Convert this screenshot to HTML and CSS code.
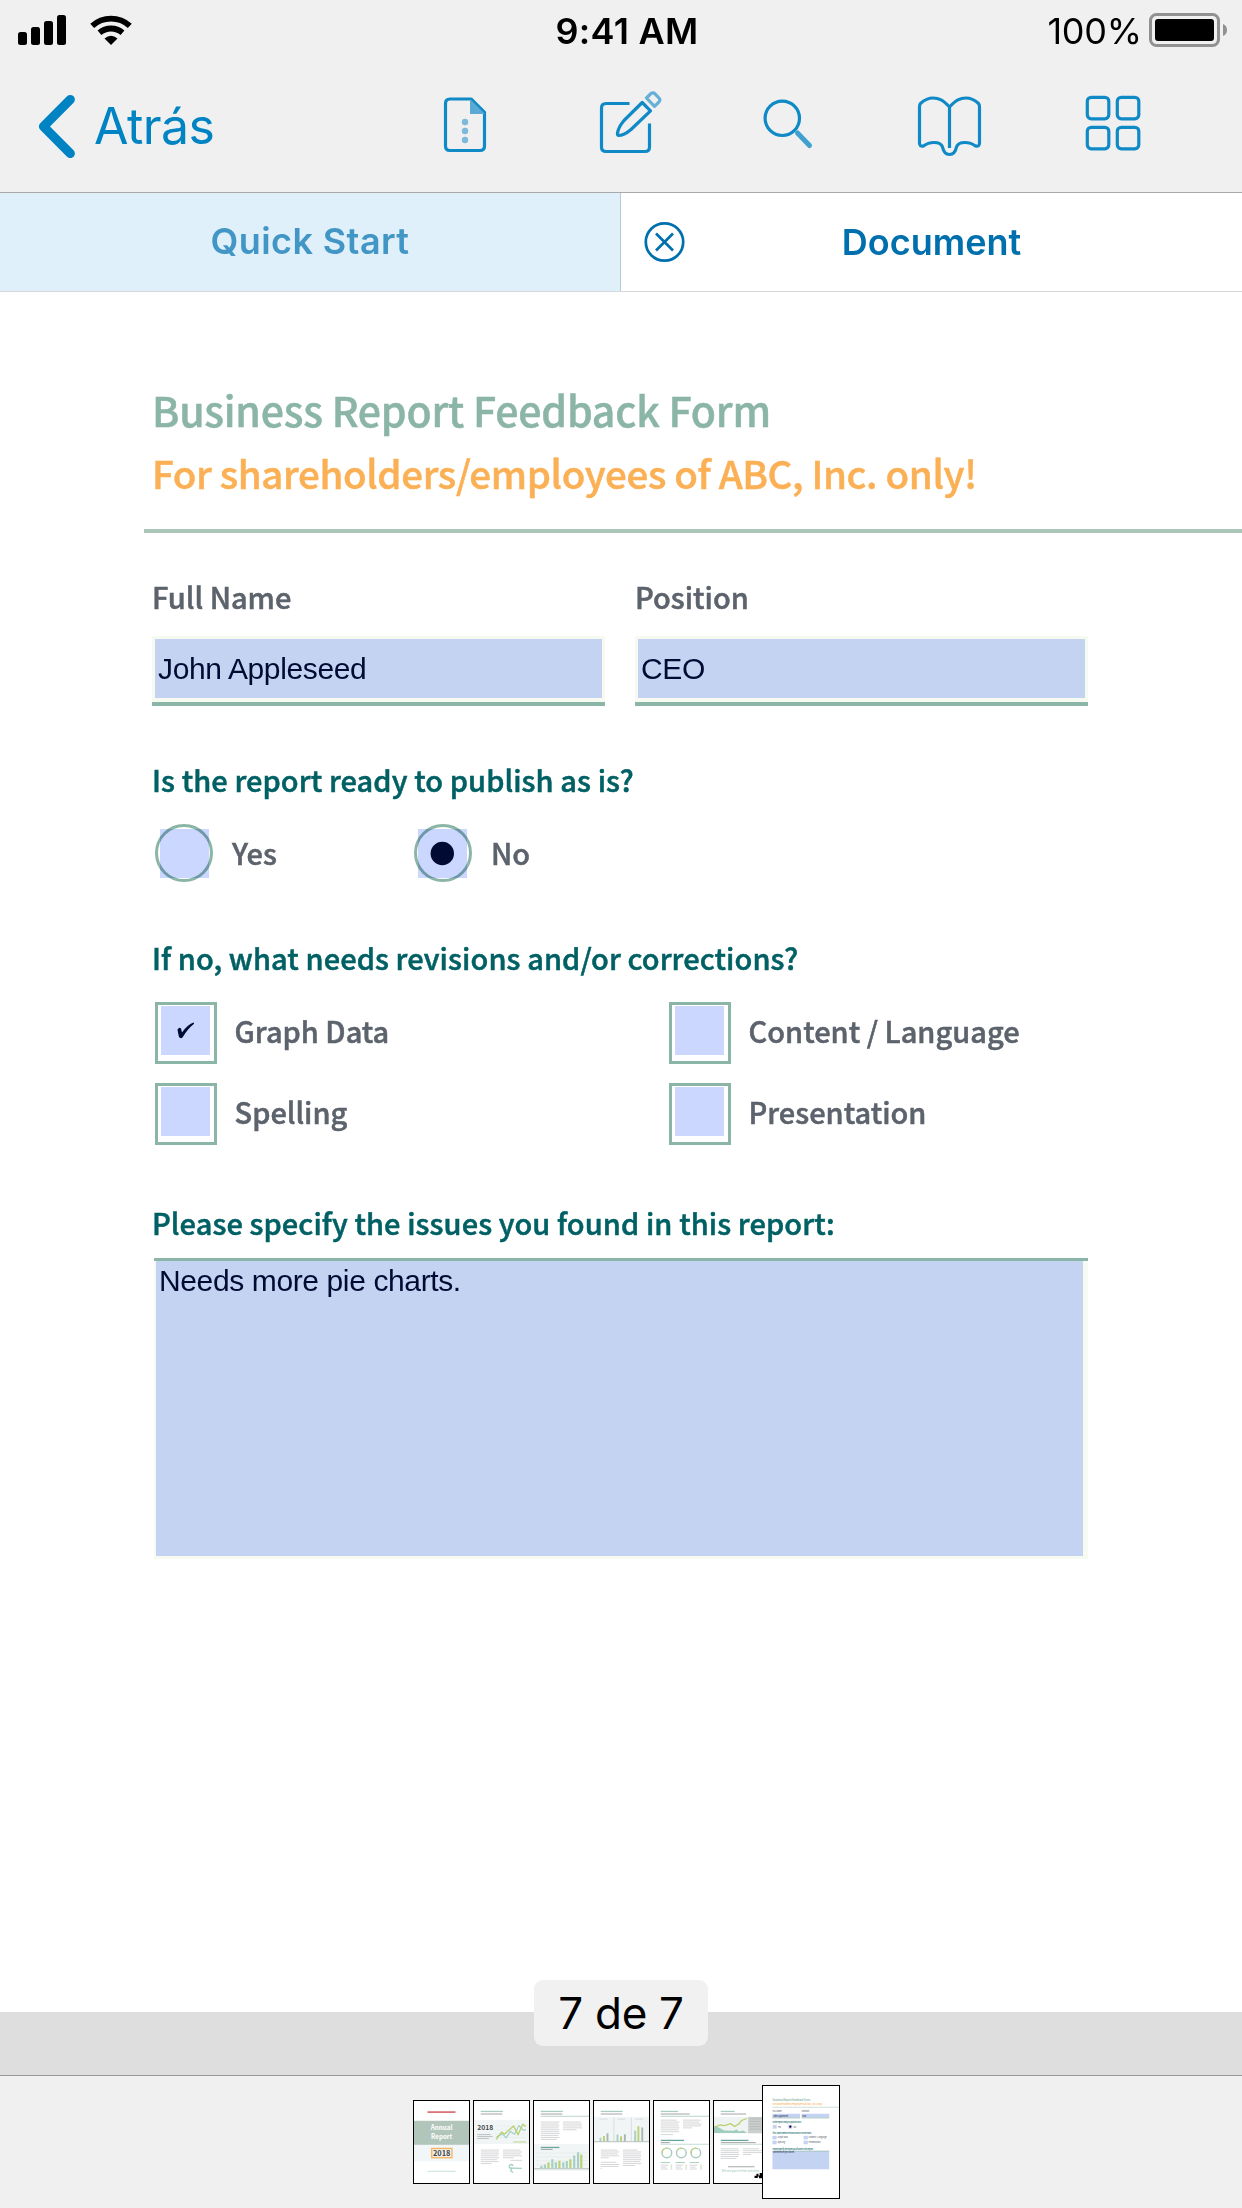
FILE: index.html
```html
<!DOCTYPE html>
<html lang="es">
<head>
<meta charset="utf-8">
<title>Document</title>
<link rel="stylesheet" href="styles.css">
</head>
<body>
<header class="header">
  <div class="status">
    <svg class="status-left" width="140" height="62" viewBox="0 0 140 62">
      <rect x="18" y="32" width="9" height="13" rx="2.5"/><rect x="31" y="27" width="9" height="18" rx="2.5"/><rect x="44" y="21" width="9" height="24" rx="2.5"/><rect x="57" y="15" width="9" height="30" rx="2.5"/>
      <path d="M92.200 25.800A28 28 0 0 1 129.800 25.800M99.500 32.800A17.500 17.500 0 0 1 122.500 32.800" fill="none" stroke="#000" stroke-width="5.800"/>
      <path d="M104.500 38.500Q111 33 117.500 38.500L111 45Z"/>
    </svg>
    <span class="time">9:41 AM</span>
    <div class="status-right">
      <span class="percent">100%</span>
      <svg width="80" height="62" viewBox="1148 0 80 62">
        <rect x="1150.500" y="14.500" width="68" height="31" rx="6" fill="none" stroke="#919191" stroke-width="3"/>
        <rect x="1155" y="19" width="59" height="22" rx="3"/>
        <path d="M1223 24q4 1.500 4 6t-4 6z" fill="#919191"/>
      </svg>
    </div>
  </div>
  <nav class="nav">
    <a class="back">
      <svg width="40" height="68" viewBox="37 90 40 68"><path d="M70.300 99.500L43.500 126.500L70.300 153.500" fill="none" stroke="#0083c3" stroke-width="9.200" stroke-linecap="round" stroke-linejoin="round"/></svg>
      <span>Atrás</span>
    </a>
    <div class="tools">
      <svg class="tool-doc" width="46" height="68" viewBox="442 90 46 68">
        <path d="M471 99H450Q445.500 99 445.500 103.500V146Q445.500 150.500 450 150.500H480Q484.500 150.500 484.500 146V112.500Z"/>
        <path class="soft" d="M470 99V114H485Z"/>
        <g class="dots"><circle cx="465" cy="122" r="3.200"/><circle cx="465" cy="131" r="3.200"/><circle cx="465" cy="140" r="3.200"/></g>
      </svg>
      <svg class="tool-edit" width="66" height="68" viewBox="598 90 66 68">
        <path d="M629.500 103.500H606Q601.500 103.500 601.500 108V147Q601.500 151.500 606 151.500H645Q649.500 151.500 649.500 147V123.500"/>
        <path d="M642.200 102.500L650.500 110.800L631 129.500Q624 135.500 618.500 135.500Q617.200 135 617.500 133Q618.500 127 624 120.500Z"/>
        <path class="light" d="M646.500 98L651 93.500Q653 92 655 93.800L659 98Q660.700 99.800 659 101.800L654.500 106.300Z"/>
      </svg>
      <svg class="tool-search" width="52" height="68" viewBox="762 90 52 68">
        <circle cx="782.300" cy="118.300" r="17.200"/><path class="handle" d="M797.500 133L809.500 145.500"/>
      </svg>
      <svg class="tool-book" width="68" height="68" viewBox="915 90 68 68">
        <path d="M949.500 148V107C943 100 939 98 933 98Q926.500 98 920.500 103.500Q919.500 104.500 919.500 107V143Q919.500 147 923.500 146Q928 142.500 934 142.500C939 142.500 941.500 143.500 942.500 147C943.500 152 945.500 154.500 949.500 154.500S955.500 152 956.500 147C957.500 143.500 960 142.500 965 142.500Q971 142.500 975.500 146Q979.500 147 979.500 143V107Q979.500 104.500 978.500 103.500Q972.500 98 966 98C960 98 956 100 949.500 107"/>
      </svg>
      <svg width="60" height="68" viewBox="1083 90 60 68">
        <rect x="1087.300" y="97.300" width="21.500" height="21.500" rx="4"/><rect x="1117.300" y="97.300" width="21.500" height="21.500" rx="4"/><rect x="1087.300" y="127.300" width="21.500" height="21.500" rx="4"/><rect x="1117.300" y="127.300" width="21.500" height="21.500" rx="4"/>
      </svg>
    </div>
  </nav>
</header>

<div class="tabs">
  <div class="tab tab-idle"><span>Quick Start</span></div>
  <div class="tab tab-active">
    <svg width="42" height="42" viewBox="0 0 42 42"><g fill="none" stroke="#006fae" stroke-width="2.700"><circle cx="21.500" cy="21" r="18.700"/><path d="M13 12.500L30 29.500M30 12.500L13 29.500"/></g></svg>
    <span class="tab-title">Document</span>
  </div>
</div>

<main class="page">
  <h1 class="title">Business Report Feedback Form</h1>
  <p class="subtitle">For shareholders/employees of ABC, Inc. only!</p>
  <div class="rule"></div>
  <div class="fields">
    <label class="field"><span class="label">Full Name</span><span class="box"><span class="value">John Appleseed</span></span></label>
    <label class="field"><span class="label">Position</span><span class="box"><span class="value">CEO</span></span></label>
  </div>
  <h2 class="question q1">Is the report ready to publish as is?</h2>
  <div class="radios">
    <div class="choice"><svg width="60" height="58" viewBox="0 0 60 58"><circle cx="30" cy="29" r="27.500" fill="#fff" stroke="#8bb5a6" stroke-width="3"/><rect class="wash" x="6" y="5" width="49" height="49"/></svg><span>Yes</span></div>
    <div class="choice"><svg width="60" height="58" viewBox="0 0 60 58"><circle cx="30" cy="29" r="27.500" fill="#fff" stroke="#8bb5a6" stroke-width="3"/><rect class="wash" x="5" y="5" width="49" height="49"/><circle cx="29.300" cy="29.500" r="11.700" fill="#000a33"/></svg><span>No</span></div>
  </div>
  <h2 class="question q2">If no, what needs revisions and/or corrections?</h2>
  <div class="checks">
    <div class="check"><i class="cbox"><b><svg width="20" height="20" viewBox="0 0 20 20"><path d="M1.500 8.500Q3.500 5.500 5 7.500L6 11.500Q11 4 17.500 1.500Q18.500 1.500 17.800 3Q11.500 8 6.500 16.500Q4.500 18 3 16Q2 12 1.500 8.500Z" fill="#000a33"/></svg></b></i><span>Graph Data</span></div>
    <div class="check"><i class="cbox"><b></b></i><span>Content / Language</span></div>
    <div class="check"><i class="cbox"><b></b></i><span>Spelling</span></div>
    <div class="check"><i class="cbox"><b></b></i><span>Presentation</span></div>
  </div>
  <h2 class="question q3">Please specify the issues you found in this report:</h2>
  <div class="area"><div class="area-fill">Needs more pie charts.</div></div>
</main>

<div class="desk"><div class="badge">7 de 7</div></div>

<footer class="thumbs">
  <svg class="thumb" viewBox="0 0 171 252">
    <rect width="171" height="252" fill="#fff"/>
    <path d="M42 33h87" stroke="#d9626a" stroke-width="5"/>
    <rect y="60" width="171" height="75" fill="#b2c5bb"/>
    <g font-weight="700" font-size="22" text-anchor="middle"><text x="86" y="90" fill="#fff" textLength="68" lengthAdjust="spacingAndGlyphs">Annual</text><text x="86" y="117" fill="#fff" textLength="66" lengthAdjust="spacingAndGlyphs">Report</text></g>
    <rect y="135" width="171" height="51" fill="#f1f6f8"/>
    <rect x="55" y="146" width="63" height="29" fill="#f3efe6" stroke="#f9b25c" stroke-width="4"/>
    <text x="86" y="169" font-size="23" font-weight="700" text-anchor="middle" fill="#404548">2018</text>
    <path d="M42 217h87" stroke="#c1dfd6" stroke-width="3"/>
  </svg>
  <svg class="thumb" viewBox="0 0 171 252">
    <rect width="171" height="252" fill="#fff"/>
    <path d="M21 31h69" stroke="#a7cec1" stroke-width="4"/><path d="M21 39h67" stroke="#9da1a5" stroke-width="3"/>
    <rect y="57" width="171" height="75" fill="#f1f5f6"/>
    <text x="10" y="89" font-size="21" font-weight="700" fill="#45494b">2018</text>
    <path d="M10 103h42m-42 6h48m-48 6h36" stroke="#afb3b6" stroke-width="2.500"/>
    <path d="M66 76h98m-98 12h98m-98 12h98m-98 12h98" stroke="#e6ebec" stroke-width="2"/>
    <path d="M70 110l18-9 12 12 13-20 13 9 14-27 14 15 8-3" fill="none" stroke="#9dcfc3" stroke-width="3.500"/>
    <path d="M69 118l17-23 9 6 28-25 14 27 15-32 9 7" fill="none" stroke="#b9cf67" stroke-width="4"/>
    <path d="M122 126h40" stroke="#ccdc9f" stroke-width="4"/>
    <path class="copy" d="M21 151h57m-57 6h56m-56 6h57m-57 6h54m-54 6h57m-57 6h50m-50 6h55m-55 6h33M90 151h54m-54 6h59m-59 6h55m-55 6h59m-59 6h34m-11 8h37"/>
    <path d="M122 200q-8-8-12 0t10 7l28 1m-31 0l-3 8 8 5" fill="none" stroke="#9dcfc3" stroke-width="4"/>
  </svg>
  <svg class="thumb" viewBox="0 0 171 252">
    <rect width="171" height="252" fill="#fff"/>
    <path d="M21 31h69" stroke="#a7cec1" stroke-width="4"/><path d="M21 39h67" stroke="#9da1a5" stroke-width="3"/><path d="M21 46h150" stroke="#b7d2c8" stroke-width="3"/>
    <path class="copy" d="M21 64h58m-58 6h56m-56 6h58m-58 6h55m-55 6h58m-58 6h57m-57 6h58m-58 6h55m-55 6h58m-58 6h50M90 64h55m-55 6h59m-59 6h58m-58 6h60m-60 6h42"/>
    <rect y="132" width="171" height="84" fill="#f1f5f6"/>
    <path d="M21 143h58" stroke="#68a69b" stroke-width="4"/><path d="M21 149h37" stroke="#9da1a5" stroke-width="3"/>
    <path d="M6 160h159M6 172h159M6 184h159M6 196h159" stroke="#e5eaeb" stroke-width="2"/>
    <path d="M23 208v-8m11 8v-12m23 12v-28m11 28v-19m23 19v-19m11 19v-23m23 23v-40m12 40v-50" stroke="#a8d1c4" stroke-width="7"/>
    <path d="M45 208v-19m34 19v-24m34 24v-28m34 28v-43" stroke="#bdd179" stroke-width="7"/><path d="M0 209h171" stroke="#c4cdca" stroke-width="4"/>
  </svg>
  <svg class="thumb" viewBox="0 0 171 252">
    <rect width="171" height="252" fill="#fff"/>
    <path d="M21 31h68" stroke="#a7cec1" stroke-width="4"/><path d="M21 39h67" stroke="#9da1a5" stroke-width="3"/>
    <rect y="48" width="171" height="77" fill="#f1f5f6"/><path d="M62 50v74m54-74v74M18 55h24m30 0h26m30 0h24" stroke="#cbd0d1" stroke-width="2"/>
    <path d="M20 125v-12m53 12v-22m55 22v-34" stroke="#a8d1c4" stroke-width="6"/><path d="M31 125v-18m53 18v-17m54 17v-48" stroke="#bdd179" stroke-width="6"/><path d="M42 125v-26m54 26v-23m54 23v-44" stroke="#a9b9b1" stroke-width="6"/>
    <path d="M0 125h171" stroke="#b5c1bc" stroke-width="3"/>
    <path class="copy" d="M21 151h52m-52 6h57m-57 6h53m-53 6h58m-58 6h25m-25 14h48m-48 7h57m-57 6h55m-55 6h4M90 151h46m-46 6h57m-57 6h55m-55 6h57m-57 6h55m-55 6h57m-57 6h54m-54 6h57m-57 6h38"/>
  </svg>
  <svg class="thumb" viewBox="0 0 171 252">
    <rect width="171" height="252" fill="#fff"/>
    <path d="M21 31h54" stroke="#a7cec1" stroke-width="4"/><path d="M21 39h90" stroke="#9da1a5" stroke-width="3"/><path d="M21 46h150" stroke="#b7d2c8" stroke-width="3"/>
    <path class="copy" d="M21 58h50m-50 6h58m-58 6h55m-55 6h57m-57 6h58m-58 6h55m-55 6h57m-57 9h38M90 58h55m-55 6h50m-50 6h58m-58 6h56m-56 6h28"/>
    <path d="M21 121h72" stroke="#68a69b" stroke-width="4"/><path d="M21 128h28" stroke="#9da1a5" stroke-width="3"/><path d="M21 133h150" stroke="#b7d2c8" stroke-width="2.500"/>
    <g fill="none" stroke="#a8cbbd" stroke-width="4.500"><circle cx="40" cy="160" r="15"/><circle cx="85" cy="160" r="15"/><circle cx="130" cy="160" r="15"/></g>
    <path d="M25 160a15 15 0 0 1 15-15M74 150a15 15 0 0 1 11-5M115 160a15 15 0 0 1 15-15" fill="none" stroke="#c3d476" stroke-width="4.500"/>
    <path d="M21 190h29m17 0h29m15 0h29" stroke="#a8cbbd" stroke-width="3"/>
    <path class="copy" d="M21 198h24m-24 6h18m-18 6h22M67 198h24m-24 6h18m-18 6h22M111 198h24m-24 6h18m-18 6h22"/><path d="M54 196v16m46-16v16m46-16v16" stroke="#dce9cf" stroke-width="5"/>
  </svg>
  <svg class="thumb" viewBox="0 0 171 252">
    <rect width="171" height="252" fill="#fff"/>
    <path d="M21 31h43" stroke="#a7cec1" stroke-width="4"/><path d="M21 39h79" stroke="#9da1a5" stroke-width="3"/>
    <rect y="48" width="106" height="51" fill="#f0f3f3"/><rect x="106" y="48" width="65" height="51" fill="#cbcfce"/>
    <path d="M0 76l12 3 20 11 30 1 8-4 8 6 12-3 12 7v1H0Z" fill="#a1cdbe"/>
    <path d="M3 79l16-6 14 2 18-6 7 4 6 5 14-9 8-10 16-6" fill="none" stroke="#b9cf67" stroke-width="4"/>
    <path d="M110 54h37m-37 8h37m-37 8h37m-37 8h37m-37 8h37" stroke="#aeb3b3" stroke-width="2"/>
    <path d="M21 121h86" stroke="#68a69b" stroke-width="4"/><path d="M21 128h109" stroke="#9da1a5" stroke-width="3"/><path d="M21 133h150" stroke="#b7d2c8" stroke-width="2.500"/>
    <path class="copy" d="M21 147h55m-55 6h58m-58 6h56m-56 6h58m-58 6h55m-55 6h48M90 147h50m-50 6h60m-60 6h60m-60 6h25"/>
    <path d="M44 203h82" stroke="#8c9194" stroke-width="2.500"/><text x="24" y="220" font-size="10.500" fill="#8fc5b4" textLength="119" lengthAdjust="spacingAndGlyphs">We are part of the solution.</text>
    <path d="M126 238v-7h6v-6h6v5h4v-8h10v17h-12v-6h-4v5Z"/>
  </svg>
  <svg class="thumb current" viewBox="0 0 234 342">
    <rect width="234" height="342" fill="#fff"/>
    <g font-size="9.300" font-weight="500"><text x="29" y="45" fill="#8bb5a6" textLength="117">Business Report Feedback Form</text><text x="29" y="56" fill="#f9b25c" font-size="8" textLength="154">For shareholders/employees of ABC, Inc. only!</text></g>
    <path d="M29 64h205" stroke="#c2d9cd" stroke-width="2.500"/>
    <g fill="#c5d3f3"><rect x="29" y="84" width="85" height="12"/><rect x="119" y="84" width="85" height="12"/><rect x="30" y="118" width="12" height="12"/><rect x="78" y="118" width="12" height="12"/><rect x="29" y="152" width="13" height="11"/><rect x="29" y="167" width="13" height="11"/><rect x="125" y="152" width="13" height="11"/><rect x="125" y="167" width="13" height="11"/><rect x="29" y="199" width="175" height="56"/></g>
    <g stroke="#8bb5a6" stroke-width="2"><path d="M29 97h85m5 0h85M29 199h175"/></g><circle cx="84" cy="124" r="3.500" fill="#000a33"/>
    <g font-size="6" fill="#5c636c" font-weight="500"><text x="29" y="79">Full Name</text><text x="119" y="79">Position</text><text x="46" y="127">Yes</text><text x="94" y="127">No</text><text x="45" y="160">Graph Data</text><text x="45" y="175">Spelling</text><text x="140" y="160">Content / Language</text><text x="140" y="175">Presentation</text></g>
    <g font-size="6.200" fill="#006064" font-weight="500"><text x="29" y="112" textLength="90">Is the report ready to publish as is?</text><text x="29" y="146" textLength="121">If no, what needs revisions and/or corrections?</text><text x="29" y="195" textLength="127">Please specify the issues you found in this report:</text></g>
    <g font-size="6.200" fill="#000a33"><text x="31" y="93">John Appleseed</text><text x="121" y="93">CEO</text><text x="31" y="206">Needs more pie charts.</text></g>
  </svg>
</footer>
</body>
</html>
```
FILE: styles.css
```css
* { box-sizing: border-box; }
body { margin: 0; width: 1242px; height: 2208px; display: flex; flex-direction: column; background: #fff; overflow: hidden; font-family: Inter, "Liberation Sans", sans-serif; }
svg { display: block; flex: none; }
h1, h2, p { margin: 0; font-weight: 500; white-space: nowrap; }

.header { height: 193px; background: #f0f0f0; border-bottom: 1px solid #a9a9a9; }
.status { height: 62px; display: grid; grid-template-columns: 400px 1fr 400px; font-size: 36px; line-height: 62px; color: #000; }
.time { text-align: center; font-weight: 600; letter-spacing: 0.3px; padding-left: 12px; }
.status-right { display: flex; justify-content: flex-end; padding-right: 14px; }
.percent { margin-right: 6px; letter-spacing: -0.2px; }
.nav { display: flex; justify-content: space-between; padding: 28px 99px 0 37px; }
.back { display: flex; gap: 17px; font-size: 50px; line-height: 73px; letter-spacing: -0.6px; color: #0083c3; }
.tools { display: flex; fill: none; stroke: #0f8ac6; stroke-width: 3.2; stroke-linejoin: round; }
.tool-doc { margin-right: 110px; }
.tool-edit { margin-right: 98px; }
.tool-search { margin-right: 101px; }
.tool-book { margin-right: 100px; }
.tools .soft { fill: #5aa9d4; stroke: none; }
.tools .dots { fill: #7cb9da; stroke: none; }
.tools .light { stroke: #66afd7; }
.tools .handle { stroke: #40a0d0; stroke-width: 5; stroke-linecap: round; }

.tabs { height: 99px; display: flex; border-bottom: 1px solid #d3d9dc; font-size: 36px; font-weight: 600; line-height: 96px; }
.tab-idle { width: 621px; text-align: center; background: #dff0fa; border-right: 1px solid #b6c9d5; color: #4296c5; letter-spacing: 0.4px; }
.tab-active { width: 621px; display: flex; align-items: center; padding: 0 64px 0 22px; color: #006fae; }
.tab-title { flex: 1; text-align: center; }

.page { height: 1720px; padding: 87px 0 0 152px; background: #fff; font-family: "Noto Sans CJK SC", "Noto Sans", sans-serif; font-size: 29px; font-weight: 500; line-height: 40px; color: #5c636c; -webkit-text-stroke: 0.5px currentColor; }
.title { font-size: 41px; line-height: 60px; letter-spacing: -0.22px; color: #8bb5a6; }
.subtitle { margin-top: 3px; font-size: 38.5px; line-height: 60px; letter-spacing: -0.38px; color: #fbb055; }
.rule { height: 4px; margin: 27px 0 0 -8px; background: #a9c6b8; }
.fields { display: grid; grid-template-columns: 453px 453px; gap: 30px; margin-top: 43px; }
.field { display: flex; flex-direction: column; gap: 20px; }
.box { height: 70px; padding: 3px 3px 4px; background: #f7faf1; border-bottom: 4px solid #8bb5a6; }
.value { display: block; height: 59px; padding-left: 3px; background: #c5d3f3; font: 30px/59px "Liberation Sans", sans-serif; letter-spacing: -0.37px; -webkit-text-stroke: 0; color: #000a33; }
.question { font-size: 29px; line-height: 40px; letter-spacing: 0.08px; color: #006064; }
.q1 { margin-top: 53px; }
.q2 { margin-top: 55px; }
.q3 { margin-top: 57px; }
.radios { display: flex; margin: 25px 0 0 2px; }
.choice { width: 259px; display: flex; gap: 18px; line-height: 57px; }
.wash { fill: #ccd7ff; mix-blend-mode: multiply; }
.checks { display: grid; grid-template-columns: 514px 400px; row-gap: 19px; margin: 25px 0 0 3px; }
.check { display: flex; gap: 17.5px; height: 62px; line-height: 57px; white-space: nowrap; }
.cbox { width: 62px; height: 62px; padding: 1px 3px 6px 3px; border: 3px solid #8bb5a6; }
.cbox b { display: grid; place-items: center; width: 49px; height: 49px; background: #ccd7ff; }
.area { width: 934px; height: 301px; margin: 16px 0 0 2px; padding: 0 5px 3px 2px; background: #f7faf1; border-top: 3px solid #8bb5a6; }
.area-fill { height: 295px; padding: 2px 0 0 3px; background: #c5d3f3; font: 30px/36px "Liberation Sans", sans-serif; letter-spacing: -0.38px; -webkit-text-stroke: 0; color: #000a33; }

.desk { height: 64px; background: #dedede; border-bottom: 1px solid #999; }
.badge { position: relative; top: -32px; width: 174px; height: 66px; margin: 0 auto; border-radius: 9px; background: #f1f1f1; text-align: center; font-size: 44px; line-height: 67px; letter-spacing: -0.3px; color: #000; }
.thumbs { height: 132px; display: flex; align-items: center; gap: 3px; padding-left: 413px; background: #f0f0f0; font-family: "Noto Sans CJK SC", sans-serif; }
.thumb { width: 57px; height: 84px; border: 1px solid #000; background: #fff; }
.current { width: 78px; height: 114px; margin-left: -11px; z-index: 1; }
.copy { fill: none; stroke: #d3d5d7; stroke-width: 3; }
```
